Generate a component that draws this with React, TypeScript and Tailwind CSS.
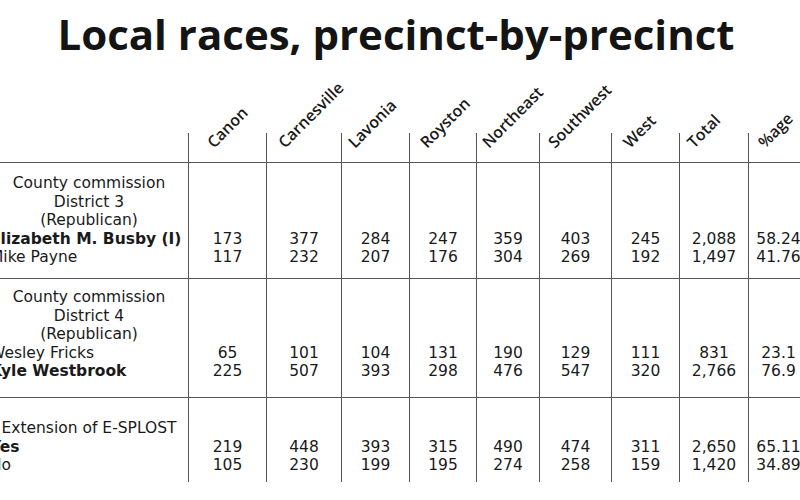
const heads = [
    { name: "Canon", pos: "left-[27px]" },
    { name: "Carnesville", pos: "left-[20px]" },
    { name: "Lavonia", pos: "left-[15px]" },
    { name: "Royston", pos: "left-[19px]" },
    { name: "Northeast", pos: "left-[14px]" },
    { name: "Southwest", pos: "left-[17px]" },
    { name: "West", pos: "left-[20px]" },
    { name: "Total", pos: "left-[16px]" },
    { name: "%age", pos: "left-[18px]" },
];

interface Race {
    title: string[];
    candidates: { name: string; win?: boolean; votes: string[] }[];
    height: string;
    pad: string;
    numPad: string;
    border: boolean;
}

const races: Race[] = [
    {
        title: ["County commission", "District 3", "(Republican)"],
        candidates: [
            {
                name: "Elizabeth M. Busby (I)",
                win: true,
                votes: ["173", "377", "284", "247", "359", "403", "245", "2,088", "58.24"],
            },
            {
                name: "Mike Payne",
                votes: ["117", "232", "207", "176", "304", "269", "192", "1,497", "41.76"],
            },
        ],
        height: "h-[116px]",
        pad: "pt-[11px]",
        numPad: "pt-[66.5px]",
        border: true,
    },
    {
        title: ["County commission", "District 4", "(Republican)"],
        candidates: [
            {
                name: "Wesley Fricks",
                votes: ["65", "101", "104", "131", "190", "129", "111", "831", "23.1"],
            },
            {
                name: "Kyle Westbrook",
                win: true,
                votes: ["225", "507", "393", "298", "476", "547", "320", "2,766", "76.9"],
            },
        ],
        height: "h-[119px]",
        pad: "pt-[9px]",
        numPad: "pt-[64.5px]",
        border: true,
    },
    {
        title: ["Extension of E-SPLOST"],
        candidates: [
            {
                name: "Yes",
                win: true,
                votes: ["219", "448", "393", "315", "490", "474", "311", "2,650", "65.11"],
            },
            {
                name: "No",
                votes: ["105", "230", "199", "195", "274", "258", "159", "1,420", "34.89"],
            },
        ],
        height: "h-[84px]",
        pad: "pt-[21px]",
        numPad: "pt-[39.5px]",
        border: false,
    },
];

const grid =
    "grid grid-cols-[200px_78px_75px_68px_67px_63px_72px_68px_69px_60px]";

const App = () => {
    return (
        <div className="w-[800px] h-[500px] overflow-hidden bg-white text-[#1a1a1a]">
            <h1 className="mt-[12px] pr-[8px] text-center text-[42px] leading-[43px] font-bold text-[#141414] font-['Open_Sans',sans-serif]">
                Local races, precinct-by-precinct
            </h1>

            <div className="ml-[-12px] w-[820px] mt-[78px] font-['DejaVu_Sans',sans-serif] text-[15.5px] leading-[18.5px]">
                {/* rotated precinct headers */}
                <div className={`${grid} h-[30px] border-b border-[#555]`}>
                    <div />
                    {heads.map((h) => (
                        <div key={h.name} className="relative border-l border-[#555]">
                            <span
                                className={`absolute bottom-[11px] ${h.pos} origin-bottom-left -rotate-45 whitespace-nowrap font-['Open_Sans',sans-serif] font-semibold text-[16px] leading-[18px] text-[#1a1a1a]`}
                            >
                                {h.name}
                            </span>
                        </div>
                    ))}
                </div>

                {races.map((r, i) => (
                    <div
                        key={i}
                        className={`${grid} ${r.height} ${r.border ? "border-b border-[#555]" : ""}`}
                    >
                        <div className={`${r.pad} pl-[2px]`}>
                            {r.title.map((t) => (
                                <div key={t} className="text-center">
                                    {t}
                                </div>
                            ))}
                            {r.candidates.map((c) => (
                                <div key={c.name} className={c.win ? "font-bold" : ""}>
                                    {c.name}
                                </div>
                            ))}
                        </div>
                        {heads.map((h, j) => (
                            <div
                                key={h.name}
                                className={`${r.numPad} border-l border-[#555] text-center`}
                            >
                                {r.candidates.map((c) => (
                                    <div key={c.name}>{c.votes[j]}</div>
                                ))}
                            </div>
                        ))}
                    </div>
                ))}
            </div>
        </div>
    );
};

export default App;
